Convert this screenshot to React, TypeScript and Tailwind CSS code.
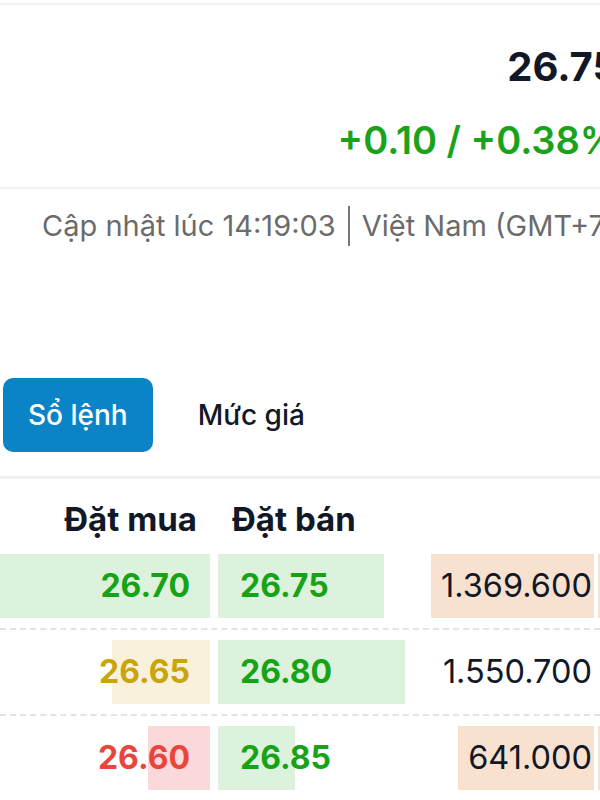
const rows = [
  {
    buy: "26.70",
    buyText: "text-[#16a316]",
    buyBg: "bg-[#dcf2dc]",
    buyBar: 210,
    sell: "26.75",
    sellBar: 166,
    volume: "1.369.600",
    volumeBg: "bg-[#f8e1cf]",
  },
  {
    buy: "26.65",
    buyText: "text-[#c9a50c]",
    buyBg: "bg-[#faf1dd]",
    buyBar: 98,
    sell: "26.80",
    sellBar: 187,
    volume: "1.550.700",
    volumeBg: "",
  },
  {
    buy: "26.60",
    buyText: "text-[#e8463c]",
    buyBg: "bg-[#fbd9da]",
    buyBar: 62,
    sell: "26.85",
    sellBar: 77,
    volume: "641.000",
    volumeBg: "bg-[#f8e1cf]",
  },
];

const OrderRow = ({ row }: { row: (typeof rows)[number] }) => (
  <div className="flex items-center py-[10px] border-b-2 border-dashed border-[#e3e3e3]">
    <div className="relative w-[210px] h-[64px] flex items-center justify-end pr-[20px]">
      <div
        className={`absolute right-0 top-0 bottom-0 ${row.buyBg}`}
        style={{ width: row.buyBar }}
      />
      <span className={`relative text-[32px] font-bold ${row.buyText}`}>{row.buy}</span>
    </div>
    <div className="relative ml-[8px] w-[200px] h-[64px] flex items-center pl-[22px]">
      <div
        className="absolute left-0 top-0 bottom-0 bg-[#dcf2dc]"
        style={{ width: row.sellBar }}
      />
      <span className="relative text-[32px] font-bold text-[#16a316]">{row.sell}</span>
    </div>
    <div className="flex-1 flex justify-end">
      <div className={`h-[64px] flex items-center pl-[10px] pr-[2px] ${row.volumeBg}`}>
        <span className="text-[32.5px] text-[#111827]">{row.volume}</span>
      </div>
      <div className={`ml-[4px] w-[2px] h-[64px] ${row.volumeBg}`} />
    </div>
  </div>
);

export default function App() {
  return (
    <div className="w-[600px] h-[800px] overflow-hidden bg-white font-['Inter',sans-serif]">
      <div className="mt-[3px] h-[2px] bg-[#f2f2f2]" />

      <div className="w-[618px] text-right pt-[38px] pb-[25px]">
        <div className="text-[40px] leading-[48px] font-bold text-[#111827]">26.75</div>
        <div className="mt-[27px] text-[38px] leading-[44px] font-semibold text-[#1aa31a] whitespace-nowrap">
          +0.10 / +0.38%
        </div>
      </div>

      <div className="h-[2px] bg-[#f2f2f2]" />

      <div className="pt-[17px] pl-[42px] flex items-center whitespace-nowrap text-[29px] leading-[36px] text-[#6b6b6b]">
        <span>Cập nhật lúc 14:19:03</span>
        <span className="mx-[12px] h-[40px] border-l-2 border-[#777]" />
        <span>Việt Nam (GMT+7)</span>
      </div>

      <div className="mt-[132px] flex items-center gap-[20px] pl-[3px]">
        <button className="h-[74px] px-[25px] rounded-[10px] bg-[#0b84c7] text-white text-[28px] font-medium">
          Sổ lệnh
        </button>
        <button className="h-[74px] px-[25px] text-[#111827] text-[28px] font-medium">
          Mức giá
        </button>
      </div>

      <div className="mt-[24px] h-[3px] bg-[#eeeef3]" />

      <div className="flex items-center h-[65px] pt-[17px] text-[33px] font-bold text-[#111827]">
        <div className="w-[210px] text-right pr-[13px]">Đặt mua</div>
        <div className="ml-[8px] pl-[14px]">Đặt bán</div>
      </div>

      {rows.map((row) => (
        <OrderRow key={row.buy} row={row} />
      ))}
    </div>
  );
}
